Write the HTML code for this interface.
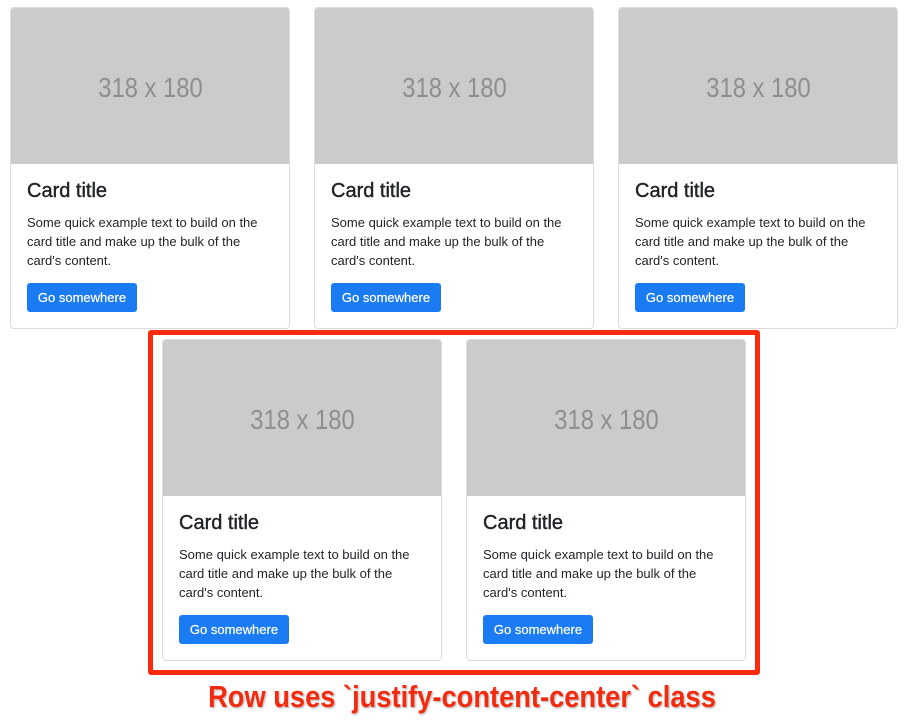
<!DOCTYPE html>
<html><head><style>
body{margin:0;width:912px;height:721px;background:#fff;position:relative;font-family:"Liberation Sans",sans-serif;overflow:hidden}
.card{position:absolute;width:278px;height:320px;border:1px solid #dcdcdc;border-radius:4px;background:#fff;overflow:hidden}
.img{height:156px;background:#cbcbcb;color:#8e8e8e;font-size:28px;text-align:center;line-height:160px;transform-origin:139px 0}
.img span{display:inline-block;transform:scaleX(0.85)}
.t{position:absolute;left:16px;top:172px;font-size:20px;color:#212529;-webkit-text-stroke:0.4px #212529}
.p{position:absolute;left:16px;top:205px;font-size:13px;line-height:19px;color:#212529;width:244px}
.b{position:absolute;left:16px;top:275px;width:110px;height:29px;background:#1a7bf2;border-radius:3px;color:#fff;font-size:13px;line-height:29px;text-align:center;-webkit-text-stroke:0.2px #fff}
.red{position:absolute;left:148px;top:330px;width:602px;height:335px;border:5px solid #fa2a0c;border-radius:3px}
.cap{position:absolute;left:0;width:924px;top:679px;text-align:center;font-size:31px;font-weight:bold;color:#f42a0e;text-shadow:0 0 2px #fff,1px 1px 2px #999;transform:scaleX(0.88);transform-origin:462px 0}
</style></head><body>
<div class="card" style="left:10px;top:7px"><div class="img"><span>318 x 180</span></div><div class="t">Card title</div><div class="p">Some quick example text to build on the card title and make up the bulk of the card's content.</div><div class="b">Go somewhere</div></div>
<div class="card" style="left:314px;top:7px"><div class="img"><span>318 x 180</span></div><div class="t">Card title</div><div class="p">Some quick example text to build on the card title and make up the bulk of the card's content.</div><div class="b">Go somewhere</div></div>
<div class="card" style="left:618px;top:7px"><div class="img"><span>318 x 180</span></div><div class="t">Card title</div><div class="p">Some quick example text to build on the card title and make up the bulk of the card's content.</div><div class="b">Go somewhere</div></div>
<div class="red"></div>
<div class="card" style="left:162px;top:339px"><div class="img"><span>318 x 180</span></div><div class="t">Card title</div><div class="p">Some quick example text to build on the card title and make up the bulk of the card's content.</div><div class="b">Go somewhere</div></div>
<div class="card" style="left:466px;top:339px"><div class="img"><span>318 x 180</span></div><div class="t">Card title</div><div class="p">Some quick example text to build on the card title and make up the bulk of the card's content.</div><div class="b">Go somewhere</div></div>
<div class="cap">Row uses `justify-content-center` class</div>
</body></html>
